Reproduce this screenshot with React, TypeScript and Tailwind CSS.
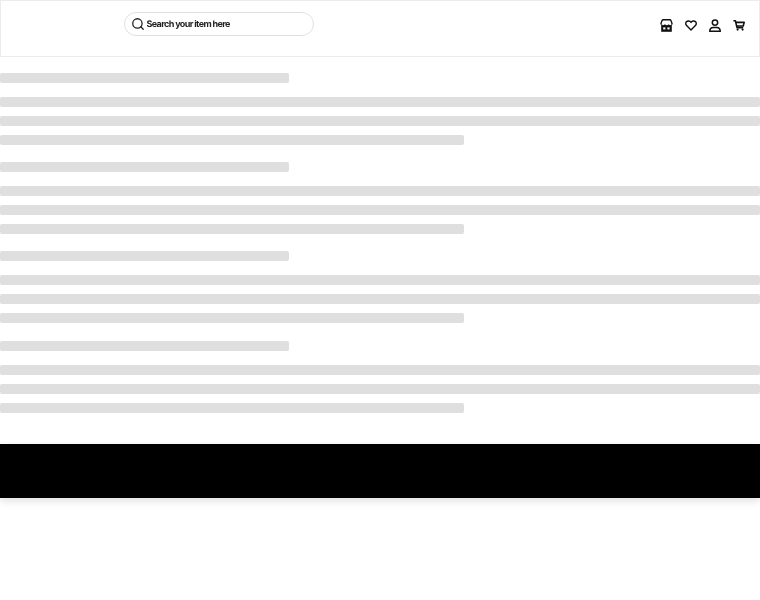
import { Search } from "lucide-react";

function Bar({ w }: { w: string }) {
  return <div className={`h-[10px] rounded-[2px] bg-[#dfdfdf] ${w}`} />;
}

function Group() {
  return (
    <div className="flex flex-col">
      <div className="mb-[14px]">
        <div className="h-[10px] w-[289px] rounded-[2px] bg-[#dfdfdf]" />
      </div>
      <div className="flex flex-col gap-[9px]">
        <Bar w="w-full" />
        <Bar w="w-full" />
        <div className="h-[10px] w-[464px] rounded-[2px] bg-[#dfdfdf]" />
      </div>
    </div>
  );
}

function Store() {
  return (
    <svg width="13" height="13" viewBox="0 0 13 13" fill="none">
      <path d="M0.8 5.4L2 1.8C2.2 1.1 2.7 0.7 3.4 0.7H9.6C10.3 0.7 10.8 1.1 11 1.8L12.2 5.4" stroke="#111" strokeWidth="1.5" />
      <path d="M1.2 5.2H11.8V12.8H1.2Z" fill="#111" />
      <path d="M1.6 5C2 6.6 4 6.6 4.5 5C5 6.6 8 6.6 8.5 5C9 6.6 11 6.6 11.4 5L10.4 2.6H2.6Z" fill="white" />
      <rect x="3.2" y="8.4" width="2.2" height="2" fill="white" />
      <rect x="7.4" y="8.4" width="2.2" height="2" fill="white" />
    </svg>
  );
}

function Heart() {
  return (
    <svg width="12" height="11" viewBox="0 0 12 11" fill="none" stroke="#111" strokeWidth="1.4" strokeLinejoin="round">
      <path d="M6 10L1.6 5.6C0.4 4.4 0.5 2.6 1.6 1.6C2.8 0.6 4.8 0.8 6 2.4C7.2 0.8 9.2 0.6 10.4 1.6C11.5 2.6 11.6 4.4 10.4 5.6Z" />
    </svg>
  );
}

function Person() {
  return (
    <svg width="12" height="13" viewBox="0 0 12 13" fill="none" stroke="#111" strokeWidth="1.5">
      <circle cx="6" cy="3.6" r="2.7" />
      <path d="M0.8 12.3C0.8 9.6 2.6 8.4 4.2 8.4H7.8C9.4 8.4 11.2 9.6 11.2 12.3Z" />
    </svg>
  );
}

function Cart() {
  return (
    <svg width="12" height="11" viewBox="0 0 12 11" fill="none" stroke="#111" strokeWidth="1.6" strokeLinejoin="round">
      <path d="M0.4 0.8H2.4L4 7.6H10.2" />
      <path d="M3 2.4H11.2L10.2 6H3.8" />
      <circle cx="4.6" cy="9.6" r="1.1" fill="#111" stroke="none" />
      <circle cx="9.6" cy="9.6" r="1.1" fill="#111" stroke="none" />
    </svg>
  );
}

export default function App() {
  return (
    <div className="min-h-[600px] bg-white font-['Lato',sans-serif]">
      <header className="flex h-[57px] items-start border border-[#ececec] pl-[123px] pr-[14px]">
        <div className="mt-[11px] flex h-[24px] w-[190px] items-center gap-[1.5px] rounded-full border-[1.5px] border-[#e0e0e0] pl-[6px] blur-[0.3px]">
          <Search size={14} color="#222" strokeWidth={2.2} />
          <span className="font-['Inter',sans-serif] text-[9px] leading-[13px] font-bold tracking-[-0.62px] text-[#222] [text-rendering:geometricPrecision]">Search your item here</span>
        </div>
        <div className="ml-auto mt-[18px] flex items-center gap-[11.9px] blur-[0.4px]">
          <Store />
          <Heart />
          <Person />
          <Cart />
        </div>
      </header>
      <main className="flex flex-col gap-[17.2px] pt-[16px] blur-[0.4px]">
        <Group />
        <Group />
        <Group />
        <Group />
      </main>
      <div className="mt-[31.4px] h-[54px] bg-black shadow-[0_3px_8px_rgba(0,0,0,0.12)]" />
    </div>
  );
}
